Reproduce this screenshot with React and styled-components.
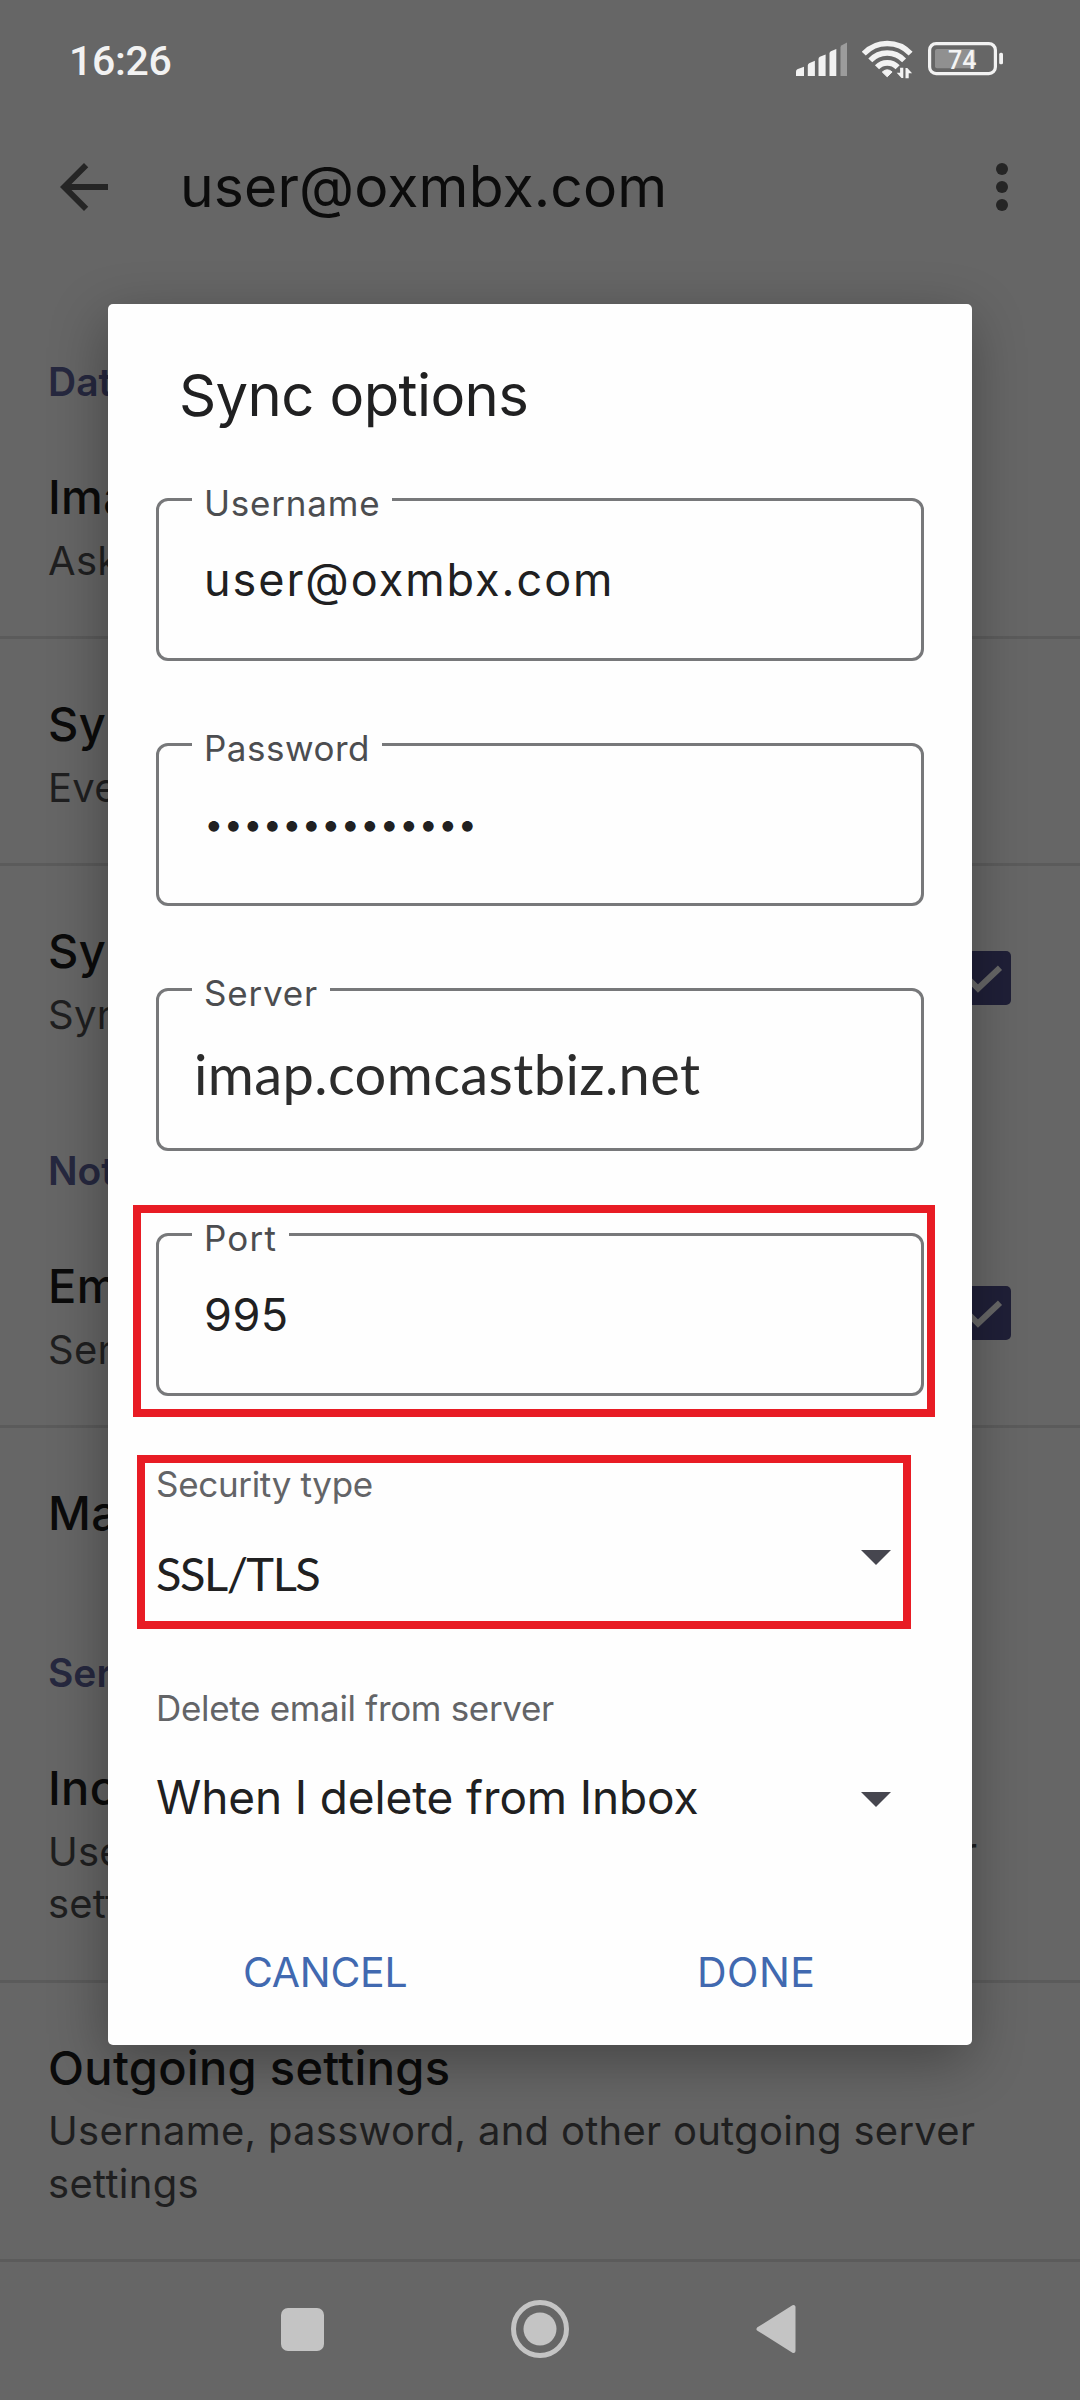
import React from "react";
import styled, { createGlobalStyle } from "styled-components";

const GlobalStyle = createGlobalStyle`
    * {
        box-sizing: border-box;
    }
    body {
        margin: 0;
        background: #666666;
        font-family: Inter, Roboto, sans-serif;
    }
`;

const Screen = styled.div`
    position: relative;
    display: flex;
    flex-direction: column;
    width: 1080px;
    height: 2400px;
    overflow: hidden;
    background: #666666;
`;

const StatusBar = styled.header`
    display: flex;
    align-items: center;
    height: 122px;
    padding: 0 77px 0 69px;
`;

const Clock = styled.span`
    flex: 1;
    font-family: Roboto, sans-serif;
    font-size: 41px;
    font-weight: 500;
    letter-spacing: -0.3px;
    color: #f2f2f2;
`;

const StatusIcons = styled.div`
    display: flex;
    gap: 15px;
`;

const BatteryLevel = styled.text`
    font-family: Roboto, sans-serif;
    font-size: 25px;
    font-weight: 500;
    fill: #f4f4f4;
`;

const AppBar = styled.div`
    display: flex;
    align-items: center;
    height: 130px;
    padding: 0 42px 0 48px;
`;

const AppTitle = styled.h1`
    flex: 1;
    margin: 0 0 0 60px;
    font-size: 57px;
    font-weight: 400;
    line-height: 72px;
    letter-spacing: 0.15px;
    color: #0c0c0c;
`;

const Settings = styled.main`
    display: flex;
    flex-direction: column;
`;

const SectionTitle = styled.h2`
    height: 160px;
    margin: 0;
    padding: 104px 48px 4px;
    font-size: 39px;
    font-weight: 600;
    line-height: 52px;
    color: #26283f;
`;

const SettingRow = styled.div`
    display: flex;
    align-items: flex-start;
    justify-content: space-between;
    min-height: 115px;
    padding: 0 60px ${(props) => (props.$last ? 0 : "49px")} 48px;
    border-bottom: ${(props) => (props.$last ? "none" : "3px solid #5b5b5b")};
`;

const SettingText = styled.div`
    padding-top: 57px;
`;

const SettingName = styled.div`
    font-size: 47px;
    font-weight: 500;
    line-height: 56px;
    letter-spacing: 0.3px;
    color: #0b0b0b;
`;

const SettingHint = styled.div`
    margin-top: 9.5px;
    font-size: 40px;
    line-height: 52.5px;
    letter-spacing: ${(props) => (props.$tight ? 0.18 : 0.28)}px;
    white-space: pre;
    color: #1f1f20;
`;

const CheckIcon = styled.svg`
    flex: none;
    margin-top: 76px;
`;

const NavBar = styled.nav`
    display: flex;
    align-items: center;
    flex: 1;
    gap: 187px;
    padding: 0 0 4px 281px;
`;

const Dialog = styled.section`
    position: absolute;
    top: 304px;
    left: 108px;
    width: 864px;
    height: 1741px;
    padding: 56px 48px 0;
    background: #fefefe;
    border-radius: 5px;
    box-shadow: -3px 16px 56px rgba(0, 0, 0, 0.32);
`;

const DialogTitle = styled.h2`
    margin: 0 0 68px 23px;
    font-size: 58px;
    font-weight: 400;
    line-height: 70px;
    letter-spacing: -0.6px;
    color: #202021;
`;

const Fields = styled.div`
    display: flex;
    flex-direction: column;
    gap: 82px;
`;

const FieldBox = styled.div`
    position: relative;
    height: 163px;
    padding: 49px 0 0 45px;
    border: 3px solid #77787a;
    border-radius: 12px;
`;

const FieldLabel = styled.label`
    position: absolute;
    top: -18px;
    left: 33px;
    padding: 0 12px;
    font-size: 35px;
    line-height: 40px;
    letter-spacing: ${(props) => props.$spacing}px;
    color: #4c4d50;
    background: #fefefe;
`;

const FieldValue = styled.div`
    font-size: 45px;
    line-height: 60px;
    letter-spacing: ${(props) => props.$spacing}px;
    color: #202021;
`;

const ServerValue = styled.div`
    margin-left: -10px;
    font-family: Lato, sans-serif;
    font-size: 56px;
    line-height: 68px;
    letter-spacing: 0.4px;
    color: #2c2c2c;
`;

const PasswordValue = styled.div`
    display: flex;
    font-size: 34px;
    line-height: 57px;
    color: #202021;
`;

const Bullet = styled.span`
    display: flex;
    justify-content: center;
    width: 19.5px;
`;

// red marker drawn over the settings the user has to change
const Marker = styled.div`
    position: absolute;
    top: ${(props) => props.$top}px;
    left: ${(props) => props.$left}px;
    width: ${(props) => props.$width}px;
    height: ${(props) => props.$height}px;
    border: 8px solid #e81c24;
`;

const Selects = styled.div`
    display: flex;
    flex-direction: column;
    gap: 83px;
    margin-top: 66px;
`;

const SelectBox = styled.div`
    position: relative;
`;

const SelectLabel = styled.div`
    margin-bottom: 37px;
    font-size: 35px;
    line-height: 44px;
    letter-spacing: -0.32px;
    color: #636467;
`;

const SelectValue = styled.div`
    display: flex;
    align-items: center;
    justify-content: space-between;
    height: 60px;
    padding-right: 33px;
    font-family: ${(props) => (props.$caps ? "Lato" : "Inter")}, sans-serif;
    font-size: ${(props) => (props.$caps ? 47 : 46)}px;
    letter-spacing: ${(props) => (props.$caps ? -1.5 : -0.14)}px;
    color: #202021;
`;

const Arrow = styled.svg`
    margin-top: ${(props) => (props.$raised ? 0 : 5)}px;
    margin-bottom: ${(props) => (props.$raised ? 31 : 0)}px;
`;

const Actions = styled.div`
    display: grid;
    grid-template-columns: 454px auto;
    justify-content: start;
    margin-top: 115px;
    padding-left: 87px;
`;

const ActionButton = styled.button`
    padding: 0;
    border: none;
    background: none;
    font-family: inherit;
    font-size: 41px;
    line-height: 60px;
    letter-spacing: ${(props) => props.$spacing}px;
    text-align: left;
    color: #4169b0;
`;

const sections = [
    {
        title: "Data",
        rows: [
            { name: "Images", hint: "Ask" },
            { name: "Sync", hint: "Every" },
            { name: "Sync", hint: "Sync", checked: true },
        ],
    },
    {
        title: "Notify",
        rows: [
            { name: "Email", hint: "Send", checked: true },
            { name: "Manage" },
        ],
    },
    {
        title: "Server",
        openEnd: true,
        rows: [
            { name: "Incoming", hint: "Username, password, and other incoming server\nsettings", tight: true },
            { name: "Outgoing settings", hint: "Username, password, and other outgoing server\nsettings" },
        ],
    },
];

function Signal() {
    return (
        <svg width="51" height="46" viewBox="796 38 51 46" fill="#f2f2f2">
            <path d="M796 76v-4.5q0-1.500 1.300-2.200l6.700-2.600V76z" />
            <path d="M807.800 76V65.500q0-1.500 1.300-2.200l5.800-2.600V76z" />
            <path d="M818.500 76V59q0-1.500 1.300-2.200l5.800-2.400V76z" />
            <path d="M829.500 76V53.500q0-1.500 1.300-2.200l5.500-2.300V76z" />
            <path d="M840.500 76V47.500q0-1.500 1.300-2.200l5.200-2.800V76z" fill="#9c9c9c" />
        </svg>
    );
}

function Wifi() {
    return (
        <svg width="51" height="46" viewBox="861 38 51 46" fill="none" stroke="#f2f2f2">
            <path d="M862.800 53.600a32 32 0 0 1 46.800 0" strokeWidth="5.400" />
            <path d="M869.300 60.400a23 23 0 0 1 33.800 0" strokeWidth="5.400" />
            <path d="M876 67.200a14.500 14.500 0 0 1 20.600 0" strokeWidth="5.800" />
            <path d="M881.300 72q4.900-4.400 9.800 0l-4.900 4.800z" fill="#f2f2f2" strokeWidth="1" strokeLinejoin="round" />
            <path d="M902.300 67.700V78h-1.800l-4.800-5.300h3.400v-5z" fill="#f2f2f2" stroke="none" />
            <path d="M904.500 78.300V68h1.800l4.800 5.300h-3.400v5z" fill="#f2f2f2" stroke="none" />
        </svg>
    );
}

function Battery() {
    return (
        <svg width="75" height="46" viewBox="928 38 75 46">
            <rect x="929.600" y="43.600" width="65.800" height="30" rx="6.500" fill="none" stroke="#f2f2f2" strokeWidth="3.200" />
            <rect x="935" y="49" width="40" height="19.300" rx="2" fill="#909090" />
            <rect x="999.200" y="52.700" width="3.800" height="11.600" rx="1.500" fill="#f2f2f2" />
            <BatteryLevel x="948" y="69">74</BatteryLevel>
        </svg>
    );
}

function Checkbox() {
    return (
        <CheckIcon width="72" height="72" viewBox="0 0 72 72">
            <rect x="9" y="9" width="54" height="54" rx="5" fill="#1f1f37" />
            <path d="M16 32.500L30 46.500l22-20.800" fill="none" stroke="#666666" strokeWidth="6" />
        </CheckIcon>
    );
}

function Setting(props) {
    return (
        <SettingRow $last={props.last}>
            <SettingText>
                <SettingName>{props.name}</SettingName>
                {props.hint && <SettingHint $tight={props.tight}>{props.hint}</SettingHint>}
            </SettingText>
            {props.checked && <Checkbox />}
        </SettingRow>
    );
}

function Field(props) {
    return (
        <FieldBox>
            <FieldLabel $spacing={props.spacing}>{props.label}</FieldLabel>
            {props.children}
        </FieldBox>
    );
}

function Select(props) {
    return (
        <SelectBox>
            <SelectLabel>{props.label}</SelectLabel>
            <SelectValue $caps={props.caps}>
                <span>{props.value}</span>
                <Arrow $raised={props.caps} width="30" height="15" viewBox="0 0 30 15">
                    <path d="M0 0h30L15 15z" fill="#46464f" />
                </Arrow>
            </SelectValue>
            {props.children}
        </SelectBox>
    );
}

function App() {
    return (
        <Screen>
            <GlobalStyle />
            <StatusBar>
                <Clock>16:26</Clock>
                <StatusIcons>
                    <Signal />
                    <Wifi />
                    <Battery />
                </StatusIcons>
            </StatusBar>
            <AppBar>
                <svg width="72" height="72" viewBox="0 0 24 24" fill="#252525">
                    <path d="M20 11H7.830l5.590-5.590L12 4l-8 8 8 8 1.410-1.410L7.830 13H20v-2z" />
                </svg>
                <AppTitle>user@oxmbx.com</AppTitle>
                <svg width="72" height="72" viewBox="0 0 24 24" fill="#252525">
                    <circle cx="12" cy="6" r="2" />
                    <circle cx="12" cy="12" r="2" />
                    <circle cx="12" cy="18" r="2" />
                </svg>
            </AppBar>
            <Settings>
                {sections.map((section) => (
                    <React.Fragment key={section.title}>
                        <SectionTitle>{section.title}</SectionTitle>
                        {section.rows.map((row, i) => (
                            <Setting
                                key={i}
                                {...row}
                                last={!section.openEnd && i === section.rows.length - 1}
                            />
                        ))}
                    </React.Fragment>
                ))}
            </Settings>
            <NavBar>
                <svg width="43" height="43" viewBox="0 0 43 43">
                    <rect width="43" height="43" rx="7" fill="#c4c4c4" />
                </svg>
                <svg width="58" height="58" viewBox="0 0 58 58">
                    <circle cx="29" cy="29" r="26.500" fill="none" stroke="#c4c4c4" strokeWidth="5" />
                    <circle cx="29" cy="29" r="16.500" fill="#c4c4c4" />
                </svg>
                <svg width="40" height="50" viewBox="0 0 40 50">
                    <path d="M37.500 3v44L2.500 25z" fill="#c4c4c4" stroke="#c4c4c4" strokeWidth="4" strokeLinejoin="round" />
                </svg>
            </NavBar>
            <Dialog>
                <DialogTitle>Sync options</DialogTitle>
                <Fields>
                    <Field label="Username" spacing={0.8}>
                        <FieldValue $spacing={1.95}>user@oxmbx.com</FieldValue>
                    </Field>
                    <Field label="Password" spacing={0.5}>
                        <PasswordValue>
                            {Array.from({ length: 14 }, (_, i) => (
                                <Bullet key={i}>•</Bullet>
                            ))}
                        </PasswordValue>
                    </Field>
                    <Field label="Server" spacing={0.8}>
                        <ServerValue>imap.comcastbiz.net</ServerValue>
                    </Field>
                    <Field label="Port" spacing={1.2}>
                        <FieldValue $spacing={0.5}>995</FieldValue>
                        <Marker $top={-31} $left={-26} $width={802} $height={212} />
                    </Field>
                </Fields>
                <Selects>
                    <Select label="Security type" value="SSL/TLS" caps>
                        <Marker $top={-7} $left={-19} $width={774} $height={174} />
                    </Select>
                    <Select label="Delete email from server" value="When I delete from Inbox" />
                </Selects>
                <Actions>
                    <ActionButton $spacing={-0.3}>CANCEL</ActionButton>
                    <ActionButton $spacing={0.5}>DONE</ActionButton>
                </Actions>
            </Dialog>
        </Screen>
    );
}

export default App;
